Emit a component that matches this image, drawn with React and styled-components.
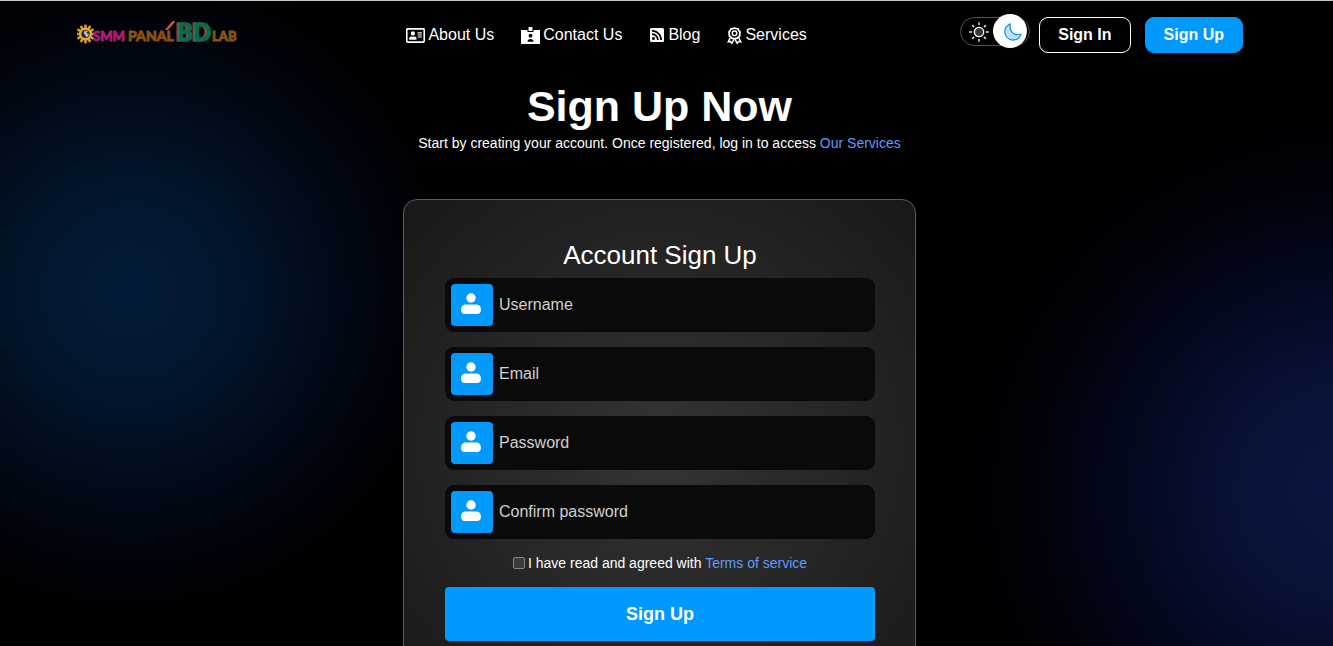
import React, { useState } from "react";
import styled, { createGlobalStyle } from "styled-components";
import { FaRegAddressCard, FaRssSquare } from "react-icons/fa";

const GlobalStyle = createGlobalStyle`
  *, *::before, *::after { box-sizing: border-box; }
  body {
    margin: 0;
    background: #000;
    color: #fff;
    font-family: "Liberation Sans", Arial, sans-serif;
    font-size: 16px;
  }
  button, input { font: inherit; }
`;

const Page = styled.div`
  min-height: 100vh;
  padding-right: 14px;
  border-top: 1px solid #c8c8c8;
  background:
    radial-gradient(circle 330px at 130px 290px, #031b38 0%, #02152d 32%, #010a18 60%, #00030a 82%, transparent 100%),
    radial-gradient(circle 390px at calc(100% + 10px) 490px, #0a1540 0%, #081236 28%, #030820 55%, #01020a 78%, transparent 100%),
    #000;
`;

const Header = styled.header`
  display: flex;
  align-items: flex-start;
  justify-content: space-between;
  padding: 16px 76px 0 77px;
`;

const LogoLink = styled.a`
  display: block;
  width: 176px;
  height: 36px;
  svg { display: block; }
`;

const Nav = styled.nav`
  display: flex;
  gap: 27px;
  height: 36px;
  align-items: center;
`;

const NavLink = styled.a`
  display: flex;
  align-items: center;
  gap: 3px;
  color: #fff;
  text-decoration: none;
  white-space: nowrap;
`;

const Actions = styled.div`
  display: flex;
  gap: 14px;
`;

const ThemeSwitch = styled.button`
  position: relative;
  width: 70px;
  height: 29px;
  margin-right: -5px;
  padding: 0 0 0 8px;
  border: 1px solid #555;
  border-radius: 16px;
  background: #000;
  cursor: pointer;
  svg { display: block; }
`;

const Knob = styled.span`
  position: absolute;
  top: -4px;
  right: 2px;
  width: 34px;
  height: 34px;
  display: grid;
  place-items: center;
  padding: 1px 0 0 6px;
  border-radius: 50%;
  background: #fff;
`;

const PillLink = styled.a`
  display: flex;
  align-items: center;
  height: 36px;
  padding: 0 18px;
  border: 1px solid ${(p) => (p.$filled ? "#0099ff" : "#fff")};
  border-radius: 9px;
  background: ${(p) => (p.$filled ? "#0099ff" : "transparent")};
  color: #fff;
  font-weight: 700;
  text-decoration: none;
  white-space: nowrap;
`;

const Main = styled.main`
  display: flex;
  flex-direction: column;
  align-items: center;
  padding: 27px 16px 48px;
`;

const Title = styled.h1`
  margin: 0;
  font-size: 43px;
  line-height: 52px;
`;

const Lead = styled.p`
  margin: 0 0 45px;
  font-size: 14px;
  line-height: 22px;
`;

const TextLink = styled.a`
  color: #5c9cff;
  text-decoration: none;
`;

const Card = styled.form`
  width: 100%;
  max-width: 513px;
  display: flex;
  flex-direction: column;
  gap: 15px;
  padding: 40px 40px 56px 41px;
  border: 1px solid #5c5c5c;
  border-radius: 14px;
  background: radial-gradient(circle at center, #343434 0%, #181818 100%);
`;

const CardTitle = styled.h2`
  margin: 0 0 -8px;
  font-size: 26px;
  line-height: 31px;
  font-weight: 500;
  text-align: center;
`;

const Field = styled.label`
  display: flex;
  align-items: center;
  gap: 6px;
  height: 54px;
  padding: 0 6px;
  border-radius: 9px;
  background: #0a0a0a;
`;

const FieldIcon = styled.span`
  flex: none;
  width: 42px;
  height: 42px;
  padding: 0 3px 2px 0;
  display: grid;
  place-items: center;
  border-radius: 4px;
  background: #0099ff;
`;

const FieldInput = styled.input`
  flex: 1;
  min-width: 0;
  height: 42px;
  padding: 0;
  border: 0;
  outline: 0;
  background: transparent;
  color: #fff;
  &::placeholder { color: #d0d0d0; opacity: 1; }
`;

const Terms = styled.div`
  display: flex;
  align-items: center;
  justify-content: center;
  gap: 3px;
  height: 18px;
  font-size: 14px;
`;

const Check = styled.input`
  appearance: none;
  width: 12px;
  height: 12px;
  margin: 0;
  border: 1px solid #858585;
  border-radius: 2px;
  background: #3b3b3b;
  &:checked { background: #0099ff; }
`;

const Submit = styled.button`
  height: 54px;
  border: 0;
  border-radius: 4px;
  background: #0099ff;
  color: #fff;
  font-size: 18px;
  font-weight: 700;
  cursor: pointer;
`;

const teeth = Array.from({ length: 12 }, (_, i) => i * 30);
const rays = Array.from({ length: 8 }, (_, i) => i * 45);

function Logo() {
  return (
    <svg width="164" height="36" viewBox="0 0 164 36" aria-label="SMM Panal BD Lab" fontFamily="Lato, sans-serif" fontWeight="900">
      {teeth.map((a) => (
        <rect key={a} x="7.2" y="7.6" width="2.6" height="4" rx="0.8" fill="#d99a1c" transform={`rotate(${a} 8.5 17)`} />
      ))}
      <circle cx="8.5" cy="17" r="5.300" fill="#20242e" stroke="#e8ac28" strokeWidth="2.400" />
      <path d="M6.500 15.500a3 3 0 0 1 4.500-1.500l-1.500 2 2.500 1.500a3 3 0 0 1-3 2.500" fill="#aeb8c4" />
      <text x="16" y="24" fontSize="13" fill="#b01c73" stroke="#b01c73" strokeWidth="0.8">SMM</text>
      <text x="51" y="24" fontSize="14" fill="#8a5410" stroke="#8a5410" strokeWidth="0.8">PANAL</text>
      <path d="M88 13l6.500-8q3-2 3.500 0l-7 8z" fill="#c9593f" />
      <text x="98" y="24" fontSize="24" fill="#c42a22" stroke="#c42a22" strokeWidth="1">BD</text>
      <text x="100" y="24" fontSize="24" fill="#056b50" stroke="#056b50" strokeWidth="1.400">BD</text>
      <text x="135" y="24" fontSize="13" fill="#8a5410" stroke="#8a5410" strokeWidth="0.8">LAB</text>
    </svg>
  );
}

function ContactCard() {
  return (
    <svg width="19" height="17" viewBox="0 0 19 17" fill="#fff">
      <path d="M0 3h6.500v2h6V3H19v14H0z" />
      <rect x="7.500" y="0" width="4" height="4" rx="0.8" />
      <circle cx="9.500" cy="8.700" r="1.900" fill="#000" />
      <path d="M6.500 14.800c0-2 1.200-2.800 3-2.800s3 .8 3 2.800z" fill="#000" />
    </svg>
  );
}

function Award() {
  return (
    <svg width="15" height="17" viewBox="0 0 15 17" fill="none" stroke="#fff">
      <path
        d="M7.500 1l1.700.7 1.900.2.700 1.700 1.300 1.400-.4 1.800.1 1.900-1.500 1.100-1.100 1.500-1.800.1-.9.500-.9-.5-1.800-.1-1.100-1.500-1.500-1.100.1-1.900-.4-1.800 1.300-1.400.7-1.700 1.900-.2z"
        strokeWidth="1.700"
        strokeLinejoin="round"
      />
      <circle cx="7.500" cy="6.300" r="2.300" strokeWidth="1.400" />
      <path d="M3.300 10.500L1.300 14.800l2.300-.2 1.300 1.800 2-4M11.700 10.500l2 4.300-2.300-.2-1.300 1.800-2-4" strokeWidth="1.500" />
    </svg>
  );
}

function Sun() {
  return (
    <svg width="20" height="20" viewBox="0 0 20 20" fill="none" stroke="#fff" strokeWidth="1.3" strokeLinecap="round">
      <circle cx="10" cy="10" r="4.700" fill="#3a3a3a" />
      {rays.map((a) => (
        <path key={a} d="M10 .8v1.700" transform={`rotate(${a} 10 10)`} />
      ))}
    </svg>
  );
}

function Moon() {
  return (
    <svg width="20" height="20" viewBox="0 0 20 20">
      <path
        d="M7.400 1.800C3.900 3.200 1.800 6 1.800 9.600c0 4.800 3.700 8.400 8.200 8.400 3.800 0 6.900-2.500 7.900-6-4.700 1.600-8.700-.2-10.100-3.700C6.900 6 6.800 4 7.400 1.800z"
        fill="#bfe2ff"
        stroke="#1498f5"
        strokeWidth="1.300"
        strokeLinejoin="round"
      />
    </svg>
  );
}

function UserGlyph() {
  return (
    <svg width="22" height="22" viewBox="0 0 22 22" fill="#fff">
      <circle cx="11" cy="5" r="4.700" />
      <path d="M5.500 11.500h11c2.800 0 4.500 2.400 4.500 5.200 0 2.700-1.500 4.300-4 4.300h-12c-2.500 0-4-1.600-4-4.300 0-2.800 1.700-5.200 4.500-5.200z" />
    </svg>
  );
}

const navItems = [
  { label: "About Us", icon: <FaRegAddressCard size={19} /> },
  { label: "Contact Us", icon: <ContactCard /> },
  { label: "Blog", icon: <FaRssSquare size={16} /> },
  { label: "Services", icon: <Award /> },
];

const fields = [
  { label: "Username", type: "text" },
  { label: "Email", type: "email" },
  { label: "Password", type: "password" },
  { label: "Confirm password", type: "password" },
];

export default function App() {
  const [agreed, setAgreed] = useState(false);
  return (
    <Page>
      <GlobalStyle />
      <Header>
        <LogoLink href="#home"><Logo /></LogoLink>
        <Nav>
          {navItems.map((n) => (
            <NavLink key={n.label} href="#nav">{n.icon}{n.label}</NavLink>
          ))}
        </Nav>
        <Actions>
          <ThemeSwitch type="button" aria-label="Toggle dark mode">
            <Sun />
            <Knob><Moon /></Knob>
          </ThemeSwitch>
          <PillLink href="#signin">Sign In</PillLink>
          <PillLink href="#signup" $filled>Sign Up</PillLink>
        </Actions>
      </Header>
      <Main>
        <Title>Sign Up Now</Title>
        <Lead>
          Start by creating your account. Once registered, log in to access{" "}
          <TextLink href="#services">Our Services</TextLink>
        </Lead>
        <Card onSubmit={(e) => e.preventDefault()}>
          <CardTitle>Account Sign Up</CardTitle>
          {fields.map((f) => (
            <Field key={f.label}>
              <FieldIcon><UserGlyph /></FieldIcon>
              <FieldInput type={f.type} placeholder={f.label} aria-label={f.label} />
            </Field>
          ))}
          <Terms>
            <Check id="terms" type="checkbox" checked={agreed} onChange={(e) => setAgreed(e.target.checked)} />
            <label htmlFor="terms">
              I have read and agreed with <TextLink href="#terms">Terms of service</TextLink>
            </label>
          </Terms>
          <Submit type="submit">Sign Up</Submit>
        </Card>
      </Main>
    </Page>
  );
}
